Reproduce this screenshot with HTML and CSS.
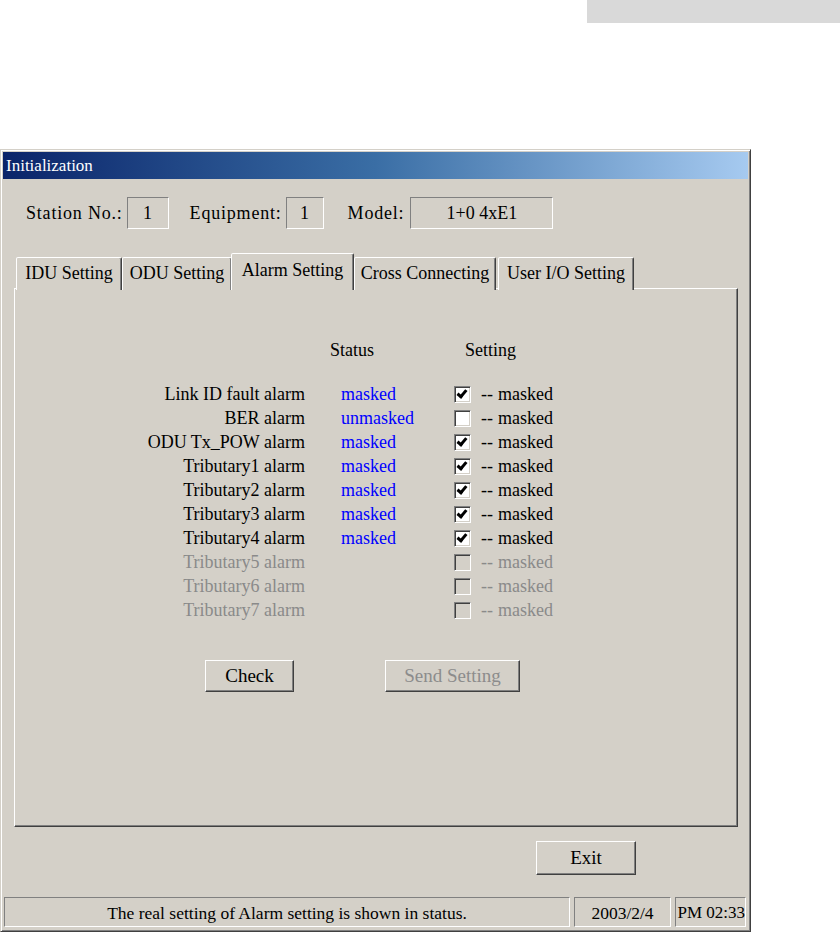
FILE: index.html
```html
<!DOCTYPE html>
<html>
<head>
    <meta charset="utf-8">
    <link rel="stylesheet" href="styles.css">
</head>
<body>
    <div class="top-strip">
        <div class="gray-block"></div>
    </div>

    <div class="window">
        <div class="titlebar">Initialization</div>

        <div class="window-body">
            <div class="info-row">
                <span class="info-label">Station No.:</span>
                <span class="field field-station">1</span>
                <span class="info-label">Equipment:</span>
                <span class="field field-equip">1</span>
                <span class="info-label">Model:</span>
                <span class="field field-model">1+0 4xE1</span>
            </div>

            <div class="tabs">
                <div class="tab tab-idu">IDU Setting</div>
                <div class="tab tab-odu">ODU Setting</div>
                <div class="tab tab-alarm active">Alarm Setting</div>
                <div class="tab tab-cross">Cross Connecting</div>
                <div class="tab tab-user">User I/O Setting</div>
            </div>

            <div class="tab-panel">
                <div class="alarm-grid">
                    <div></div>
                    <div class="head head-status">Status</div>
                    <div class="head head-setting">Setting</div>
                </div>

                <div class="alarm-grid" id="alarmRows"></div>

                <div class="panel-buttons">
                    <button class="btn btn-check">Check</button>
                    <button class="btn btn-send" disabled>Send Setting</button>
                </div>
            </div>

            <div class="footer-row">
                <button class="btn btn-exit">Exit</button>
            </div>
        </div>

        <div class="statusbar">
            <div class="status-cell status-msg">The real setting of Alarm setting is shown in status.</div>
            <div class="status-cell status-date">2003/2/4</div>
            <div class="status-cell status-time"><span>PM 02:33</span></div>
        </div>
    </div>

    <script>
        // name, status text, checked, enabled
        var alarms = [
            ['Link ID fault alarm', 'masked', true, true],
            ['BER alarm', 'unmasked', false, true],
            ['ODU Tx_POW alarm', 'masked', true, true],
            ['Tributary1 alarm', 'masked', true, true],
            ['Tributary2 alarm', 'masked', true, true],
            ['Tributary3 alarm', 'masked', true, true],
            ['Tributary4 alarm', 'masked', true, true],
            ['Tributary5 alarm', '', false, false],
            ['Tributary6 alarm', '', false, false],
            ['Tributary7 alarm', '', false, false]
        ];

        function AddAlarmRow(a) {
            const container = document.getElementById('alarmRows');
            const off = a[3] ? '' : ' disabled';
            container.insertAdjacentHTML('beforeend', `
                <div class="cell-label${off}">${a[0]}</div>
                <div class="cell-status">${a[1]}</div>
                <div class="cell-setting${off}">
                    <span class="checkbox${a[2] ? ' checked' : ''}"></span>
                    <span class="dash">--</span>
                    <span>masked</span>
                </div>`);
        }

        alarms.forEach(a => AddAlarmRow(a));
    </script>
</body>
</html>
```

FILE: styles.css
```css
body {
    margin: 0;
    background-color: #ffffff;
    font-family: "Liberation Serif", "DejaVu Serif", serif;
    font-size: 18px;
    color: #000000;
}

.top-strip {
    display: flex;
    justify-content: flex-end;
    height: 23px;
}
.top-strip .gray-block {
    width: 253px;
    background-color: #d9d9d9;
}

/* the dialog window */
.window {
    box-sizing: border-box;
    width: 751px;
    height: 783px;
    margin-top: 126px;
    padding: 2px;
    display: flex;
    flex-direction: column;
    background-color: #d4d0c8;
    border: 1px solid;
    border-color: #d4d0c8 #404040 #404040 #d4d0c8;
    box-shadow: inset 1px 1px #ffffff, inset -1px -1px #808080;
}

.titlebar {
    height: 27px;
    line-height: 27px;
    padding-left: 3px;
    font-size: 17px;
    color: #ffffff;
    background: linear-gradient(to right, #0a246a, #3a6ea5 50%, #a6caf0);
}

.window-body {
    flex-grow: 1;
    display: flex;
    flex-direction: column;
    padding: 0 10px 0 11px;
}

.info-row {
    display: flex;
    align-items: center;
    margin-top: 18px;
    padding-left: 12px;
    height: 32px;
}
.info-label {
    margin-right: 4px;
    letter-spacing: 0.8px;
}
.field {
    box-sizing: border-box;
    height: 32px;
    line-height: 30px;
    text-align: center;
    border: 1px solid;
    border-color: #808080 #ffffff #ffffff #808080;
    margin-right: 21px;
}
.field-station { width: 42px; }
.field-equip { width: 38px; margin-right: 24px; }
.field-model { width: 143px; margin-left: 2px; }

/* tabs */
.tabs {
    display: flex;
    align-items: flex-end;
    margin-top: 24px;
    margin-bottom: -2px;
    padding-left: 2px;
    position: relative;
    z-index: 1;
}
.tab {
    box-sizing: border-box;
    height: 33px;
    line-height: 30px;
    text-align: center;
    border: 1px solid;
    border-bottom: none;
    border-color: #ffffff #404040 transparent #ffffff;
    box-shadow: inset -1px 0 #808080;
    border-radius: 2px 2px 0 0;
    background-color: #d4d0c8;
}
.tab.active {
    height: 37px;
    line-height: 32px;
    margin: 0 -1px;
}
.tab-idu { width: 106px; }
.tab-odu { width: 110px; }
.tab-alarm { width: 123px; }
.tab-cross { width: 142px; margin-left: 1px; }
.tab-user { width: 136px; margin-left: 2px; }

.tab-panel {
    box-sizing: border-box;
    height: 539px;
    padding-top: 49px;
    border: 1px solid;
    border-color: #ffffff #404040 #404040 #ffffff;
    box-shadow: inset -1px -1px #808080;
}

.alarm-grid {
    display: grid;
    grid-template-columns: 290px 149px 1fr;
    line-height: 24px;
}
#alarmRows {
    margin-top: 20px;
}
.head-status {
    padding-left: 25px;
}
.head-setting {
    padding-left: 11px;
}
.cell-label {
    text-align: right;
}
.cell-status {
    padding-left: 36px;
    color: #0000ff;
}
.cell-setting {
    display: flex;
    align-items: center;
}
.disabled {
    color: #8a8a8a;
}
.dash {
    margin: 0 5px 0 10px;
}

.checkbox {
    box-sizing: border-box;
    position: relative;
    width: 17px;
    height: 17px;
    background-color: #ffffff;
    border: 1px solid;
    border-color: #808080 #ffffff #ffffff #808080;
    box-shadow: inset 1px 1px #404040, inset -1px -1px #d4d0c8;
}
.disabled .checkbox {
    background-color: #d4d0c8;
}
.checkbox.checked::after {
    content: "";
    position: absolute;
    left: 4px;
    top: 1px;
    width: 3px;
    height: 7px;
    border: solid #000000;
    border-width: 0 3px 3px 0;
    transform: rotate(40deg);
}

/* buttons */
.btn {
    box-sizing: border-box;
    height: 32px;
    padding: 0;
    font-family: inherit;
    font-size: 19px;
    color: #000000;
    background-color: #d4d0c8;
    border: 1px solid;
    border-color: #ffffff #404040 #404040 #ffffff;
    box-shadow: inset -1px -1px #808080;
}
.btn:disabled {
    color: #8c8c8c;
}

.panel-buttons {
    display: flex;
    margin-top: 38px;
    padding-left: 190px;
    gap: 91px;
}
.btn-check { width: 89px; }
.btn-send { width: 135px; }

.footer-row {
    display: flex;
    justify-content: flex-end;
    margin-top: 14px;
    padding-right: 102px;
}
.btn-exit {
    width: 100px;
    height: 34px;
}

/* status bar */
.statusbar {
    display: flex;
    gap: 4px;
    height: 30px;
    margin: 0 1px 2px 1px;
    font-size: 17.5px;
}
.status-cell {
    box-sizing: border-box;
    line-height: 30px;
    text-align: center;
    white-space: nowrap;
    overflow: hidden;
    border: 1px solid;
    border-color: #808080 #ffffff #ffffff #808080;
}
.status-msg { width: 566px; }
.status-date { width: 97px; }
.status-time {
    width: 71px;
    display: flex;
    justify-content: flex-end;
    font-size: 17px;
}
```
